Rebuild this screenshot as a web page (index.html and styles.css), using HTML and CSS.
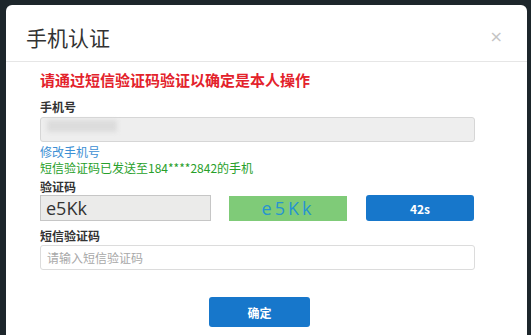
FILE: index.html
```html
<!DOCTYPE html>
<html lang="zh">
<head>
<meta charset="utf-8">
<link rel="stylesheet" href="styles.css">
</head>
<body>
<div class="modal">
  <div class="modal-header">
    <h1 class="title">手机认证</h1>
    <span class="close">×</span>
  </div>
  <div class="modal-body">
    <p class="warn">请通过短信验证码验证以确定是本人操作</p>
    <div class="label l-phone">手机号</div>
    <div class="input disabled"><span class="blur"></span></div>
    <a class="link">修改手机号</a>
    <div class="sent">短信验证码已发送至184****2842的手机</div>
    <div class="label l-code">验证码</div>
    <div class="code-row">
      <div class="input disabled code-input">e5Kk</div>
      <div class="captcha">e5Kk</div>
      <div class="btn btn-timer">42s</div>
    </div>
    <div class="label l-sms">短信验证码</div>
    <div class="input placeholder">请输入短信验证码</div>
    <div class="footer">
      <div class="btn btn-ok">确定</div>
    </div>
  </div>
</div>
</body>
</html>
```
FILE: styles.css
```css
html, body {
  margin: 0;
  height: 100%;
}
body {
  background: #1d262b;
  padding: 5px 4px 0 6px;
  box-sizing: border-box;
  font-family: "Noto Sans CJK SC", "Noto Sans", sans-serif;
  overflow: hidden;
}
.modal {
  background: #fff;
  border-radius: 6px 6px 0 0;
  height: 330px;
}
.modal-header {
  height: 57px;
  box-sizing: border-box;
  border-bottom: 1px solid #e6e6e6;
  display: flex;
  align-items: center;
  justify-content: space-between;
  padding: 8px 24px 0 20px;
}
.title {
  margin: 0;
  font-size: 21px;
  font-weight: normal;
  color: #333;
  line-height: 30px;
}
.close {
  color: #c4c4c4;
  font-size: 16px;
  line-height: 16px;
  font-family: "DejaVu Sans", sans-serif;
}
.modal-body {
  padding: 0 52px 0 34px;
}
.warn {
  margin: 0;
  padding-top: 6px;
  color: #e3222b;
  font-size: 15px;
  font-weight: bold;
  line-height: 24px;
}
.label {
  font-size: 12px;
  font-weight: bold;
  color: #333;
  line-height: 16px;
}
.l-phone { margin-top: 7px; margin-bottom: 2px; }
.l-code { margin-top: 3px; margin-bottom: 0; }
.l-sms { margin-top: 7px; margin-bottom: 1px; }
.input {
  height: 25px;
  box-sizing: border-box;
  border: 1px solid #d6d6d6;
  border-radius: 3px;
  display: flex;
  align-items: center;
  padding: 0 6px;
}
.disabled {
  background: #eeeeee;
}
.blur {
  display: block;
  width: 70px;
  height: 12px;
  background: #dcdcdc;
  filter: blur(2px);
  margin-top: -8px;
}
.link {
  display: block;
  color: #3c8fd4;
  font-size: 12px;
  line-height: 16px;
  margin-top: 2px;
}
.sent {
  color: #27a02a;
  font-size: 12px;
  line-height: 16px;
}
.code-row {
  display: flex;
  align-items: center;
  gap: 18px;
}
.code-input {
  width: 171px;
  height: 26px;
  border-radius: 0;
  border-color: #c6c6c6;
  background: #ebebea;
  font-family: "Open Sans", sans-serif;
  font-size: 18px;
  color: #333;
  padding-left: 5px;
}
.captcha {
  width: 118px;
  height: 25px;
  background: #7fcb78;
  color: #2794d0;
  font-family: "Open Sans", sans-serif;
  font-size: 18px;
  letter-spacing: 3px;
  display: flex;
  align-items: center;
  justify-content: center;
}
.btn {
  background: #1777cb;
  color: #fff;
  border-radius: 3px;
  display: flex;
  align-items: center;
  justify-content: center;
  font-size: 12px;
  font-weight: bold;
}
.btn-timer {
  width: 108px;
  height: 26px;
  margin-left: 1px;
}
.placeholder {
  background: #fff;
  color: #a8a8a8;
  font-size: 12px;
  border-color: #dcdcdc;
}
.footer {
  display: flex;
  justify-content: center;
  padding-top: 27px;
  padding-left: 4px;
}
.btn-ok {
  width: 101px;
  height: 30px;
}
```
